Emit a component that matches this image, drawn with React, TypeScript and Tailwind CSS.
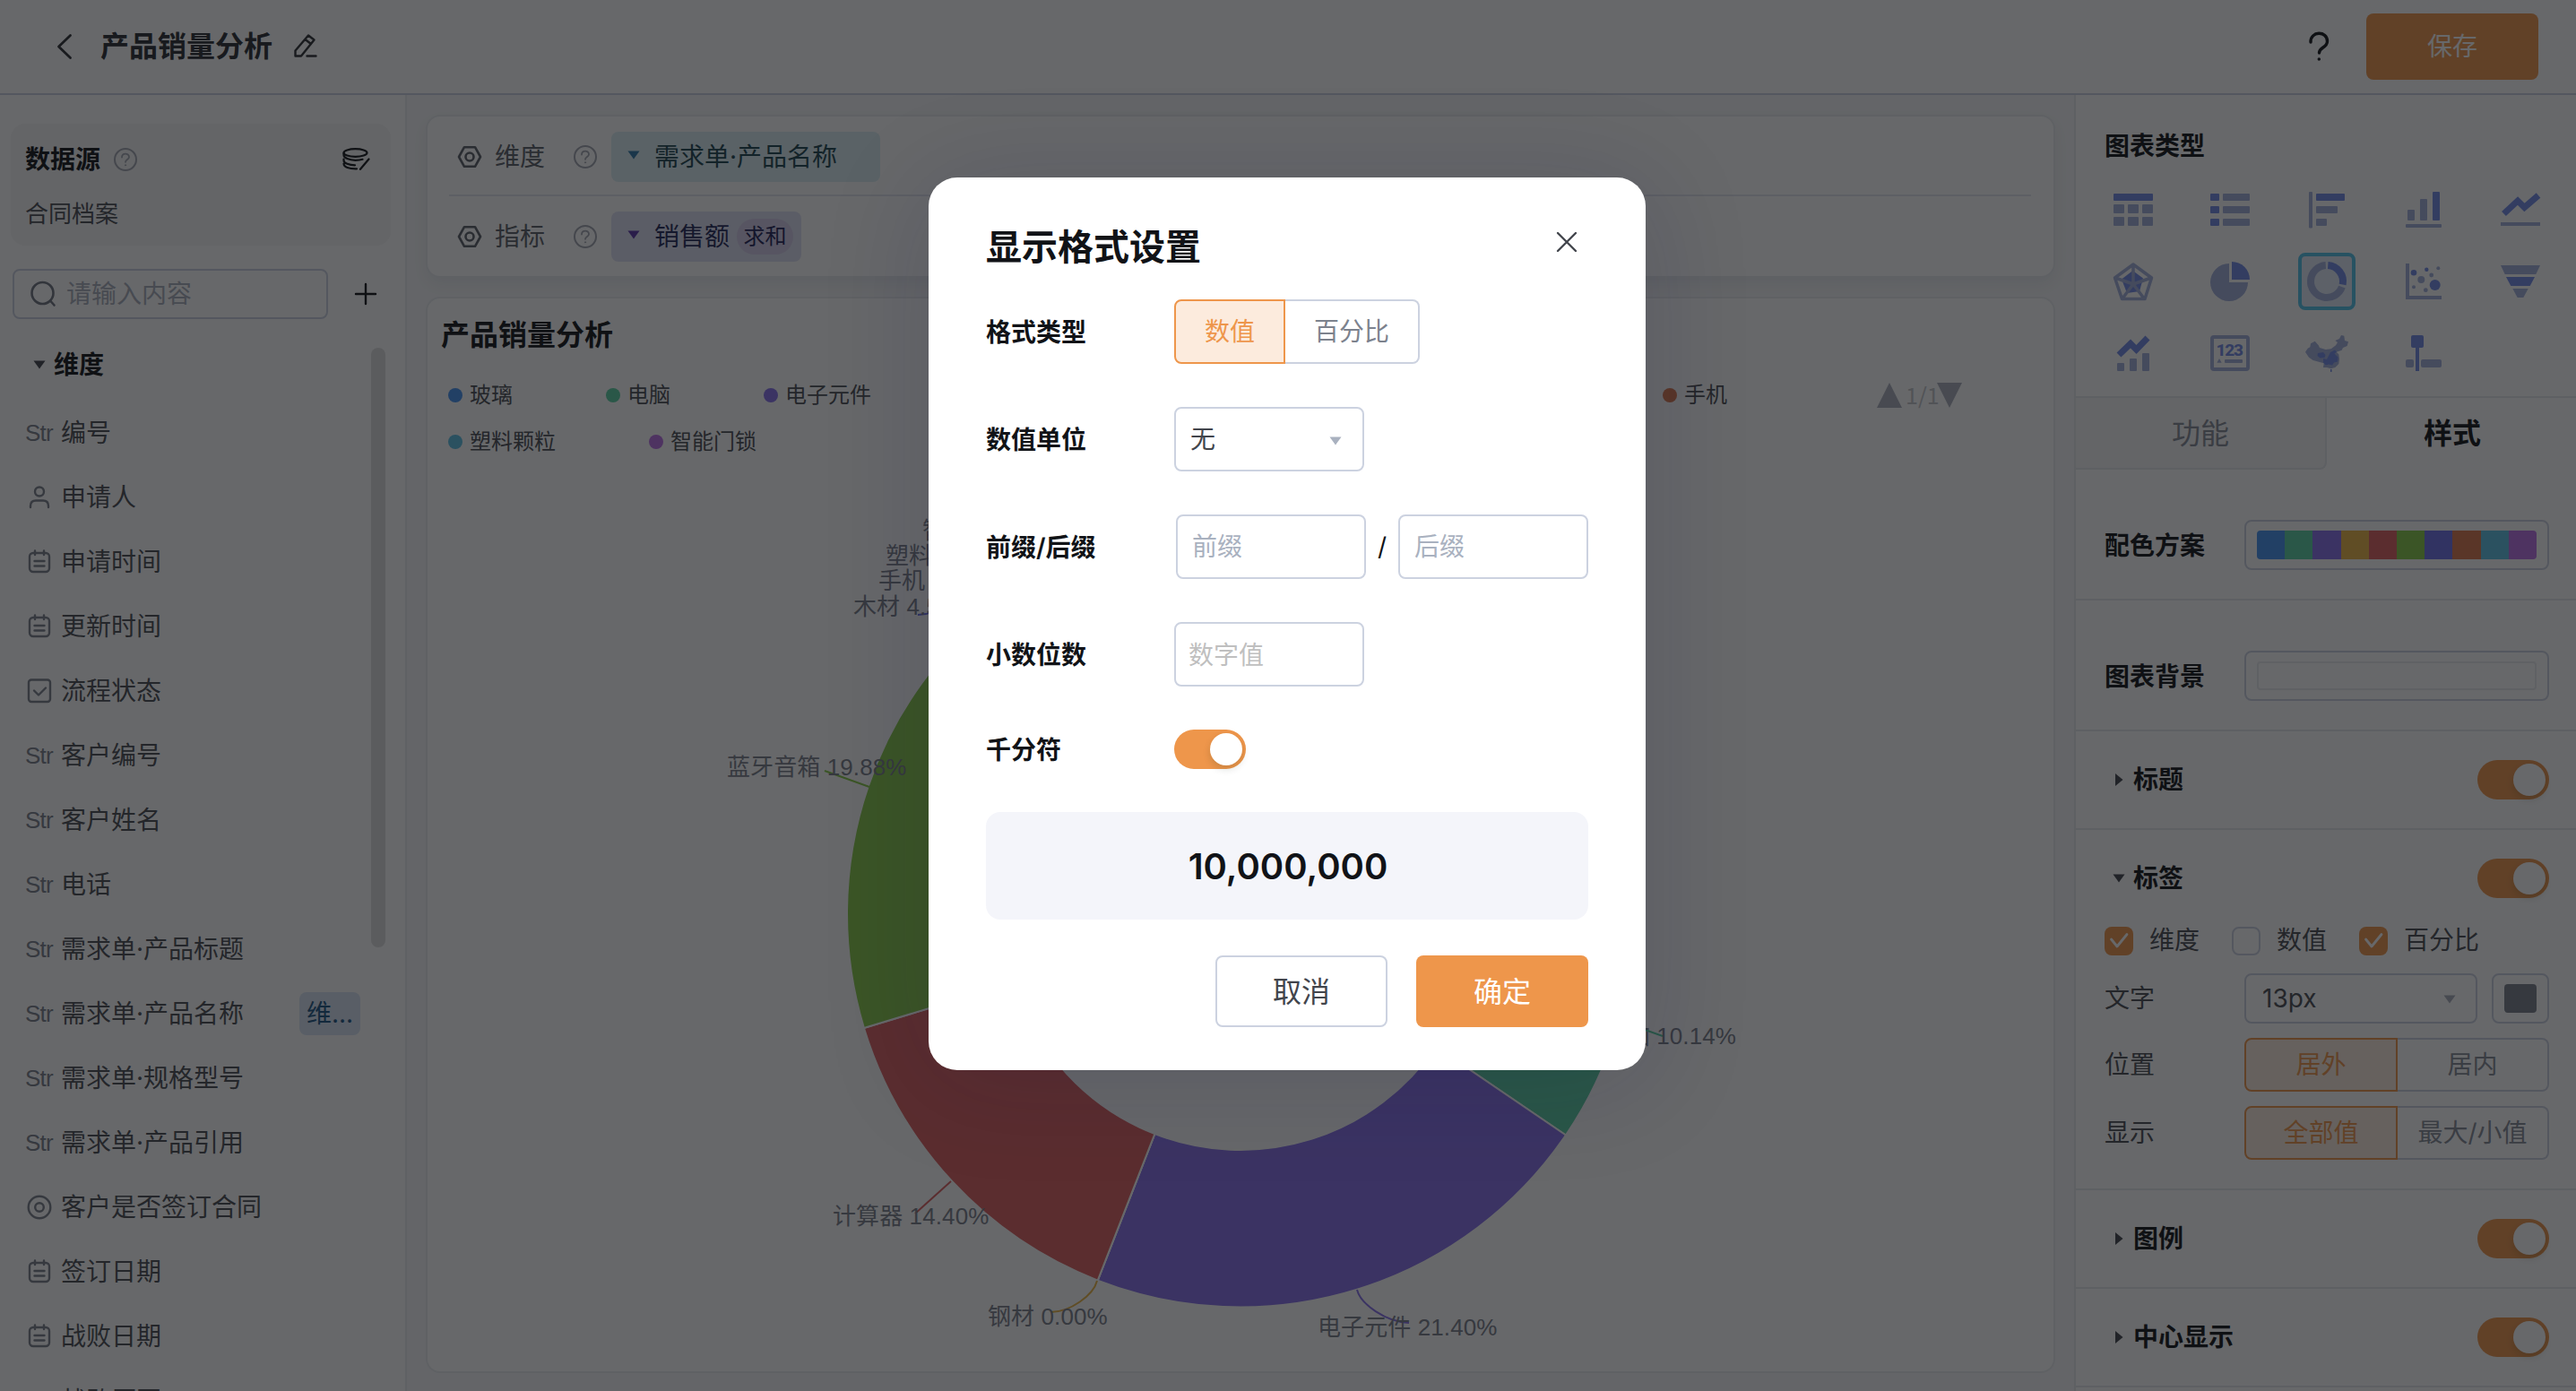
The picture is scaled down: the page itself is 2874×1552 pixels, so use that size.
import type { ReactNode } from 'react';
import { clsx } from 'clsx';

const PALETTE = [
  '#4692f0', '#5ad0a2', '#8771eb', '#ecb646', '#dd6161',
  '#88cc48', '#6c6fe8', '#dc784c', '#5cc0e4', '#bc6fe6',
];

type FieldKind = 'str' | 'user' | 'date' | 'check' | 'radio';

const FIELDS: { kind: FieldKind; label: string; tag?: string }[] = [
  { kind: 'str', label: '编号' },
  { kind: 'user', label: '申请人' },
  { kind: 'date', label: '申请时间' },
  { kind: 'date', label: '更新时间' },
  { kind: 'check', label: '流程状态' },
  { kind: 'str', label: '客户编号' },
  { kind: 'str', label: '客户姓名' },
  { kind: 'str', label: '电话' },
  { kind: 'str', label: '需求单·产品标题' },
  { kind: 'str', label: '需求单·产品名称', tag: '维...' },
  { kind: 'str', label: '需求单·规格型号' },
  { kind: 'str', label: '需求单·产品引用' },
  { kind: 'radio', label: '客户是否签订合同' },
  { kind: 'date', label: '签订日期' },
  { kind: 'date', label: '战败日期' },
  { kind: 'str', label: '战败原因' },
];

const LEGEND = [
  [
    { name: '玻璃', color: PALETTE[0], width: 'w-[176px]' },
    { name: '电脑', color: PALETTE[1], width: 'w-[176px]' },
    { name: '电子元件', color: PALETTE[2], width: 'w-[224px]' },
    { name: '钢材', color: PALETTE[3], width: 'w-[176px]' },
    { name: '计算器', color: PALETTE[4], width: 'w-[200px]' },
    { name: '蓝牙音箱', color: PALETTE[5], width: 'w-[224px]' },
    { name: '木材', color: PALETTE[6], width: 'w-[179px]' },
    { name: '手机', color: PALETTE[7], width: 'w-[239px]' },
  ],
  [
    { name: '塑料颗粒', color: PALETTE[8], width: 'w-[224px]' },
    { name: '智能门锁', color: PALETTE[9], width: 'w-[224px]' },
  ],
];

// share of the total, in percent, clockwise from twelve o'clock
const SLICES = [
  { value: 24.37, color: PALETTE[0] },
  { value: 10.14, color: PALETTE[1] },
  { value: 21.4, color: PALETTE[2] },
  { value: 0, color: PALETTE[3] },
  { value: 14.4, color: PALETTE[4] },
  { value: 19.88, color: PALETTE[5] },
  { value: 4.51, color: PALETTE[6] },
  { value: 2.6, color: PALETTE[7] },
  { value: 1.5, color: PALETTE[8] },
  { value: 1.2, color: PALETTE[9] },
];

const CX = 1384;
const CY = 1018.5;

function point(r: number, pct: number) {
  const a = (pct / 100) * Math.PI * 2;
  return `${(CX + r * Math.sin(a)).toFixed(2)} ${(CY - r * Math.cos(a)).toFixed(2)}`;
}

function slicePath(from: number, to: number) {
  const big = to - from > 50 ? 1 : 0;
  return `M${point(439, from)} A439 439 0 ${big} 1 ${point(439, to)} L${point(263.5, to)} A263.5 263.5 0 ${big} 0 ${point(263.5, from)} Z`;
}

function Help() {
  return (
    <svg width="26" height="26" viewBox="0 0 26 26" fill="none" stroke="#a2a6b0" strokeWidth="2" strokeLinecap="round">
      <circle cx="13" cy="13" r="12" />
      <path d="M9 10.500c0-5 8-5 8-.3 0 2.800-4 2.800-4 5.600" strokeWidth="1.800" />
      <circle cx="13" cy="19.300" r="0.600" fill="#a2a6b0" strokeWidth="1" />
    </svg>
  );
}

function Hexagon() {
  return (
    <svg width="28" height="28" viewBox="0 0 28 28" fill="none" stroke="#5b5f68" strokeWidth="2.600" strokeLinejoin="round">
      <path d="M8 3.200h12L26 14l-6 10.800H8L2 14Z" />
      <circle cx="14" cy="14" r="4.500" />
    </svg>
  );
}

function Caret({ className, right }: { className?: string; right?: boolean }) {
  return (
    <svg width="14" height="14" viewBox="0 0 14 14" className={clsx('shrink-0', className)} fill="currentColor">
      {right ? <path d="M3 0l8.500 7L3 14z" /> : <path d="M0.500 2.500h13L7 11.500z" />}
    </svg>
  );
}

function FieldIcon({ kind }: { kind: FieldKind }) {
  if (kind === 'str') {
    return <span className="mr-px font-['Liberation_Sans',sans-serif] text-[26px] tracking-[-0.8px]">Str</span>;
  }
  return (
    <svg width="32" height="32" viewBox="0 0 32 32" fill="none" stroke="currentColor" strokeWidth="2.400" strokeLinecap="round" strokeLinejoin="round">
      {kind === 'user' && (
        <>
          <circle cx="16" cy="9.500" r="5" />
          <path d="M6 27v-1.500c0-4 2.500-6 6-6h8c3.500 0 6 2 6 6V27" />
        </>
      )}
      {kind === 'date' && (
        <>
          <rect x="5" y="6" width="22" height="21" rx="4" />
          <path d="M11 3.500v4.500M21 3.500v4.500M10.500 15h11M10.500 20.500h11" />
        </>
      )}
      {kind === 'check' && (
        <>
          <rect x="4" y="3.500" width="24" height="24.500" rx="3" />
          <path d="M10 15.500l5 5 8-8" />
        </>
      )}
      {kind === 'radio' && (
        <>
          <circle cx="16" cy="16" r="12.300" />
          <circle cx="16" cy="16" r="4.800" />
        </>
      )}
    </svg>
  );
}

function Toggle() {
  return (
    <div className="flex h-11 w-20 shrink-0 justify-end rounded-full bg-[#ee964b] p-1">
      <div className="size-9 rounded-full bg-white shadow-[0_4px_8px_rgba(0,35,11,0.15)]" />
    </div>
  );
}

const D = '#728be6';
const L = '#a3b0dc';

const CHART_ICONS: ReactNode[] = [
  <g fill={L}>
    <rect x="2" y="6" width="44" height="8" rx="1" fill={D} />
    {[18, 32].map(y => [2, 18, 34].map(x => <rect key={`${x}-${y}`} x={x} y={y} width="12" height="10" rx="1" />))}
  </g>,
  <g>
    {[6, 20, 34].map(y => (
      <g key={y}>
        <rect x="2" y={y} width="10" height="8" rx="1" fill={D} />
        <rect x="16" y={y} width="30" height="8" rx="1" fill={L} />
      </g>
    ))}
  </g>,
  <g fill={L}>
    <rect x="4" y="4" width="4" height="40.500" rx="1" />
    <rect x="12" y="6" width="32" height="8" rx="1" fill={D} />
    <rect x="12" y="20" width="24" height="8" rx="1" />
    <rect x="12" y="34" width="12" height="8" rx="1" />
  </g>,
  <g fill={L}>
    <rect x="6" y="24" width="8" height="12" rx="1" />
    <rect x="20" y="12" width="8" height="24" rx="1" />
    <rect x="34" y="4" width="8" height="32" rx="1" fill={D} />
    <rect x="4" y="40" width="40" height="4" rx="1" />
  </g>,
  <g>
    <path d="M5.500 28.500L21 14l7.500 7.500L44 8" fill="none" stroke={D} strokeWidth="7" />
    <rect x="2" y="38" width="44" height="4" fill={L} />
  </g>,
  <g strokeLinejoin="round">
    <path d="M23.500 12L35 20.500 31 35l-14 2-6-15.500z" fill={D} />
    <path d="M24 5l20.500 15L37 43.500H11.500L3.500 20zM24 5v22M44 20L24 27l12 16M4 20l20 7-12 16" fill="none" stroke={L} strokeWidth="3.500" />
  </g>,
  <g>
    <path d="M23 4a21 21 0 1 0 21 21H23z" fill={L} />
    <path d="M26 2a20 20 0 0 1 20 20H26z" fill={D} />
  </g>,
  <g fill="none" strokeWidth="8">
    <path d="M25.260 6.040A18 18 0 0 1 41.670 27.430" stroke={D} />
    <path d="M40.910 30.160A18 18 0 1 1 22.740 6.040" stroke={L} />
  </g>,
  <g fill={L}>
    <path d="M4 4h4v36h36v4H4z" />
    <circle cx="13" cy="14.300" r="3.300" fill={D} />
    <circle cx="27.300" cy="10.700" r="2.200" fill={D} />
    <circle cx="40.300" cy="9.300" r="2" />
    <circle cx="32.700" cy="17" r="2.400" />
    <circle cx="21.300" cy="22" r="4" />
    <circle cx="13" cy="30.300" r="2" />
    <circle cx="26.300" cy="33.700" r="2.400" />
    <circle cx="36.700" cy="28" r="6" fill={D} />
  </g>,
  <g fill={L}>
    <path d="M2 6h44l-4.700 10H6.700z" />
    <path d="M8 19h32l-5.300 10H13.300z" fill={D} />
    <path d="M15.300 32h17.400l-5.400 10h-6.600z" />
  </g>,
  <g fill={L}>
    <path d="M8 26l13-12.500 6.500 6.500L40 7" fill="none" stroke={D} strokeWidth="7" />
    <rect x="6" y="35" width="8" height="9" rx="1" />
    <rect x="20" y="30" width="8" height="14" rx="1" />
    <rect x="34" y="24" width="8" height="20" rx="1" />
  </g>,
  <g fill={L}>
    <rect x="4" y="6" width="40" height="36" rx="2" fill="none" stroke={L} strokeWidth="4" />
    <text x="8.500" y="27.200" fontSize="19" fontWeight="800" textLength="30.500" fill={D} fontFamily="Roboto, sans-serif">123</text>
    <path d="M9.300 34.700h5.400L12 30z" />
    <rect x="18" y="31" width="20" height="4" rx="1" />
  </g>,
  <g fill={L}>
    <path d="M0 22.700l2.700-4 2.600-1.400.7-4 4.700-2.600 4 4.600L16 18l6.700 2 6-.700 5.300-4 2-3.300-2.700-2L38 8l2-4 3.300.7L44 10l4 1.300-1.300 4.700L42 18l-1.300 2.700-6 2 2.600 2.600.7 5.400-.7 5.300-4 4-4.600 1.300-4.700-1.300h-4l.7-4.700L16 34l-7.300-2L4 28.700z" />
    <path d="M14 24l6-1 2.500 3-1 3-5 .5-3-2.500zM20 30l4 1 2-4 2-4 5-2.500 2 2-2.500 2 4 4-.5 5-4 1-2 3-4-1-3 1-3-3zM28 42h1.500v3H28z" fill={D} />
  </g>,
  <g fill={L}>
    <rect x="4" y="31" width="9" height="9" rx="2" />
    <rect x="21" y="31" width="23" height="9" rx="2" />
    <rect x="10" y="4" width="14" height="14" rx="2" fill={D} />
    <rect x="15" y="17" width="4" height="27" fill={D} />
  </g>,
];

function Header() {
  return (
    <header className="flex h-[106px] shrink-0 items-center border-b-2 border-[#ccd2e1] bg-white pl-[60px] pr-[42px]">
      <svg width="24" height="30" viewBox="0 0 24 30" fill="none" stroke="#2c2e33" strokeWidth="2.800" strokeLinecap="round" strokeLinejoin="round">
        <path d="M18.500 2.500L5.500 15l13 12.500" />
      </svg>
      <h1 className="ml-7 text-[32px] font-semibold text-[#2a2c31]">产品销量分析</h1>
      <svg className="mb-0.5 ml-6" width="26" height="28" viewBox="0 0 26 28" fill="none" stroke="#2c2e33" strokeWidth="2.400" strokeLinecap="round" strokeLinejoin="round">
        <path d="M16 2.500l6.500 5L8 25.500H1.500v-6zM12.500 7l6.500 5M14.500 25.500h10" />
      </svg>
      <svg className="ml-auto" width="26" height="34" viewBox="0 0 26 34" fill="none" stroke="#111317" strokeWidth="3.400" strokeLinecap="round">
        <path d="M4 12C3.500-.5 22.500-1 22.500 11c0 7.500-9 6.500-9 13" />
        <circle cx="13.300" cy="31" r="1" fill="#111317" strokeWidth="1.500" />
      </svg>
      <button className="ml-10 h-[74px] w-[192px] rounded-lg bg-[#ee964b] text-[28px] text-white">保存</button>
    </header>
  );
}

function Sidebar() {
  return (
    <aside className="flex w-[454px] shrink-0 flex-col border-r-2 border-[#eaebee] bg-white pt-8">
      <div className="ml-3 flex h-[136px] w-[424px] flex-col rounded-2xl bg-[#f6f6f6] px-4 pt-[19px]">
        <div className="flex h-[42px] items-center">
          <span className="text-[28px] font-semibold text-[#111317]">数据源</span>
          <span className="ml-[15px]"><Help /></span>
          <svg className="ml-auto mr-[7px]" width="32" height="28" viewBox="0 0 32 28" fill="none" stroke="#111317" strokeWidth="2.200" strokeLinecap="round" strokeLinejoin="round">
            <ellipse cx="15.500" cy="6.500" rx="13" ry="4.300" />
            <path d="M2.500 7v2.500c0 2.800 5.500 7.500 19 6.500M4.500 12.500c-5.500 5.500 2 9.500 17 8M3 18.500c0 4 6 6 14.500 5.700M30.500 13L21 24.500" stroke="none" />
            <path d="M2.500 7v2c0 3.200 6 5.800 13 5.800 3 0 5.800-.3 8-1M2.500 13.500v1.500c0 3.200 6 5.300 12.500 5.300M2.500 18.500c0 3.800 6 6 14.500 5.800M30.500 13.500L21 24.800" />
          </svg>
        </div>
        <span className="mt-[21px] text-[26px] leading-[38px] text-[#494c53]">合同档案</span>
      </div>

      <div className="mt-[26px] flex items-center pl-[14px]">
        <div className="flex h-14 w-[352px] items-center rounded-lg border-2 border-[#ccd2e1] pl-[17px]">
          <svg width="30" height="30" viewBox="0 0 30 30" fill="none" stroke="#6f7480" strokeWidth="2.600" strokeLinecap="round">
            <circle cx="14.500" cy="14" r="12" />
            <path d="M23.500 23l4 4.500" />
          </svg>
          <span className="ml-[11px] text-[28px] text-[#a9aeba]">请输入内容</span>
        </div>
        <svg className="ml-[29px]" width="26" height="26" viewBox="0 0 26 26" stroke="#111317" strokeWidth="2.400" strokeLinecap="round">
          <path d="M13 2v22M2 13h22" />
        </svg>
      </div>

      <div className="mt-8 flex min-h-0 flex-1">
        <div className="w-[414px] overflow-hidden">
          <div className="flex h-[38px] items-center pl-[37px]">
            <Caret className="text-[#42454c]" />
            <span className="ml-[9px] text-[28px] font-semibold text-[#111317]">维度</span>
          </div>
          <div className="mt-[21px]">
            {FIELDS.map(f => (
              <div key={f.label} className="flex h-[72px] items-center">
                <span className="flex w-[68px] items-center justify-center pl-5 text-[#7b808c]">
                  <FieldIcon kind={f.kind} />
                </span>
                <span className="whitespace-nowrap text-[28px] text-[#494c53]">{f.label}</span>
                {f.tag && (
                  <span className="ml-auto mr-3 flex h-12 w-[68px] items-center justify-center rounded-lg bg-[#d8e4f4] text-[28px] text-[#1d5583]">
                    {f.tag}
                  </span>
                )}
              </div>
            ))}
          </div>
        </div>
        <div className="h-[669px] w-4 rounded-full bg-[#dedede]" />
      </div>
    </aside>
  );
}

function Conditions() {
  return (
    <section className="flex h-[182px] shrink-0 flex-col rounded-2xl border-2 border-[#e9ebef] bg-white pl-6 pr-[25px] shadow-[0_8px_16px_rgba(20,30,60,0.06)]">
      <div className="flex h-[90px] items-center border-b-2 border-[#e3e6ee] pl-[9px] pt-0.5">
        <Hexagon />
        <span className="ml-[14px] text-[28px] text-[#5b5f68]">维度</span>
        <span className="ml-8"><Help /></span>
        <div className="ml-4 flex h-14 w-[300px] items-center rounded-lg bg-[#dbeff3] pl-[18px]">
          <Caret className="mb-1 text-[#2f78a8]" />
          <span className="ml-4 text-[28px] text-[#1b4550]">需求单·产品名称</span>
        </div>
      </div>
      <div className="flex h-[90px] items-center pl-[9px]">
        <Hexagon />
        <span className="ml-[14px] text-[28px] text-[#5b5f68]">指标</span>
        <span className="ml-8"><Help /></span>
        <div className="ml-4 flex h-14 w-[212px] items-center rounded-lg bg-[#dfe1f3] pl-[18px]">
          <Caret className="mb-1 text-[#5a34a8]" />
          <span className="ml-4 text-[28px] text-[#1f2757]">销售额</span>
          <span className="ml-2 flex h-10 w-[63px] items-center justify-center rounded-[20px] bg-[#d3cbea] text-2xl text-[#1f1f57]">求和</span>
        </div>
      </div>
    </section>
  );
}

function DonutChart() {
  let acc = 0;
  const arcs = SLICES.map(s => {
    const from = acc;
    acc += s.value;
    return { d: slicePath(from, acc), color: s.color };
  });
  return (
    <svg width="1814" height="1009" viewBox="477 520 1814 1009" className="block font-['Liberation_Sans','Noto_Sans_CJK_SC',sans-serif]">
      {arcs.map(a => (
        <path key={a.color} d={a.d} fill={a.color} stroke="#fff" strokeWidth="2" />
      ))}
      <g fill="none" strokeWidth="2">
        <path d="M920 859l50 18" stroke={PALETTE[5]} />
        <path d="M1021 1353l40-36" stroke={PALETTE[4]} />
        <path d="M1224 1428c-4 16-30 35-52 35" stroke={PALETTE[3]} />
        <path d="M1514 1438c4 16 32 36 58 37" stroke={PALETTE[2]} />
        <path d="M1810 1139l45 16" stroke={PALETTE[1]} />
        <path d="M1024 685c14 0 22-5 50-20" stroke={PALETTE[6]} />
      </g>
      <g fontSize="26" fill="#7b808c" letterSpacing="0.1">
        <text x="1029" y="600">智能门锁 1.20%</text>
        <text x="988" y="628">塑料颗粒 1.50%</text>
        <text x="980" y="656">手机 2.60%</text>
        <text x="952" y="685">木材 4.51%</text>
        <text x="811" y="864">蓝牙音箱 19.88%</text>
        <text x="929" y="1365">计算器 14.40%</text>
        <text x="1102" y="1477">钢材 0.00%</text>
        <text x="1470" y="1489">电子元件 21.40%</text>
        <text x="1937" y="1164" textAnchor="end">电脑 10.14%</text>
      </g>
    </svg>
  );
}

function ChartPanel() {
  return (
    <section className="mt-[21px] flex h-[1201px] shrink-0 flex-col rounded-2xl border-2 border-[#e9ebef] bg-white">
      <h2 className="pl-[15px] pt-[17px] text-[32px] font-semibold leading-[48px] text-[#111317]">产品销量分析</h2>
      <div className="mb-0.5 mt-[17px] pl-[23px]">
        {LEGEND.map((row, i) => (
          <div key={i} className="flex h-[52px] items-center">
            {row.map(item => (
              <div key={item.name} className={clsx('flex shrink-0 items-center gap-2', item.width)}>
                <span className="size-4 rounded-full" style={{ background: item.color }} />
                <span className="text-2xl text-[#494c53]">{item.name}</span>
              </div>
            ))}
            {i === 0 && (
              <div className="flex items-center gap-1 text-[#c3c5c9]">
                <svg width="28" height="28" viewBox="0 0 28 28" fill="#aaafbb"><path d="M0 28L14 0l14 28z" /></svg>
                <span className="w-[31px] text-center font-['Noto_Sans_CJK_SC',sans-serif] text-[25px]">1/1</span>
                <svg width="28" height="28" viewBox="0 0 28 28" fill="#aaafbb"><path d="M0 0h28L14 28z" /></svg>
              </div>
            )}
          </div>
        ))}
      </div>
      <DonutChart />
    </section>
  );
}

function Segmented({ items }: { items: [string, string] }) {
  return (
    <div className="flex h-[60px] w-[340px] text-[28px]">
      <div className="flex w-[171px] items-center justify-center rounded-l-lg border-2 border-[#ee964b] bg-[#fcebdd] text-[#ee964b]">{items[0]}</div>
      <div className="flex flex-1 items-center justify-center rounded-r-lg border-2 border-l-0 border-[#ccd2e1] text-[#868b96]">{items[1]}</div>
    </div>
  );
}

function Checkbox({ label, checked }: { label: string; checked?: boolean }) {
  return (
    <div className="flex items-center">
      <div className={clsx('flex size-8 items-center justify-center rounded-lg', checked ? 'bg-[#ee964b]' : 'border-2 border-[#ccd2e1]')}>
        {checked && (
          <svg width="22" height="22" viewBox="0 0 22 22" fill="none" stroke="#fff" strokeWidth="2.800" strokeLinecap="round" strokeLinejoin="round">
            <path d="M2.500 9l6.500 8L20 3.500" />
          </svg>
        )}
      </div>
      <span className="mb-0.5 ml-[18px] text-[28px] text-[#494c53]">{label}</span>
    </div>
  );
}

function SwitchRow({ label, open }: { label: string; open?: boolean }) {
  return (
    <div className="flex h-[108px] items-center pl-[41px] pr-[30px]">
      <Caret right={!open} className="text-[#42454c]" />
      <span className="ml-[9px] text-[28px] font-semibold text-[#111317]">{label}</span>
      <div className="ml-auto"><Toggle /></div>
    </div>
  );
}

function SettingRow({ label, children, className }: { label: string; children: ReactNode; className?: string }) {
  return (
    <div className={clsx('flex items-center justify-between', className)}>
      <span className="text-[28px] text-[#494c53]">{label}</span>
      {children}
    </div>
  );
}

function StylePanel() {
  return (
    <aside className="flex w-[560px] shrink-0 flex-col overflow-hidden border-l-2 border-[#e6e8eb] bg-white">
      <div className="h-[336px] shrink-0 pt-[37px]">
        <h3 className="pl-8 text-[28px] font-semibold leading-[40px] text-[#111317]">图表类型</h3>
        <div className="mt-[11px] grid w-[550px] grid-cols-5 pl-[10px]">
          {CHART_ICONS.map((icon, i) => (
            <div key={i} className="flex h-20 items-center justify-center">
              <div className={clsx('flex size-16 items-center justify-center rounded-lg', i === 7 && 'border-4 border-[#52c3ea] bg-[#e3ebf8]')}>
                <svg width="48" height="48" viewBox="0 0 48 48" className="shrink-0">{icon}</svg>
              </div>
            </div>
          ))}
        </div>
      </div>

      <div className="flex h-[82px] shrink-0 border-t-2 border-[#e6e8eb] text-[32px]">
        <div className="flex w-[280px] items-center justify-center rounded-br-lg border-b-2 border-r-2 border-[#e6e8eb] bg-[#f6f6f6] pt-0.5 text-[#868b96]">功能</div>
        <div className="flex flex-1 items-center justify-center pl-0.5 font-semibold text-[#111317]">样式</div>
      </div>

      <div className="flex h-[146px] shrink-0 items-center justify-between border-b-2 border-[#e6e8eb] pb-3 pl-8 pr-[30px] pt-9">
        <span className="pt-px text-[28px] font-semibold text-[#111317]">配色方案</span>
        <div className="h-14 w-[340px] rounded-lg border-2 border-[#ccd2e1] px-3 py-[10px]">
          <div className="flex h-8 overflow-hidden rounded">
            {PALETTE.map(c => <span key={c} className="flex-1" style={{ background: c }} />)}
          </div>
        </div>
      </div>

      <div className="flex h-[146px] shrink-0 items-center justify-between border-b-2 border-[#e6e8eb] pl-8 pr-[30px] pt-6">
        <span className="pt-px text-[28px] font-semibold text-[#111317]">图表背景</span>
        <div className="h-14 w-[340px] rounded-lg border-2 border-[#ccd2e1] px-3 py-[10px]">
          <div className="h-8 rounded border-2 border-[#e9ebee]" />
        </div>
      </div>

      <div className="shrink-0 border-b-2 border-[#e6e8eb]">
        <SwitchRow label="标题" />
      </div>

      <div className="h-[402px] shrink-0 border-b-2 border-[#e6e8eb]">
        <SwitchRow label="标签" open />
        <div className="pl-8 pr-[30px]">
          <div className="flex h-8 items-center gap-9">
            <Checkbox label="维度" checked />
            <Checkbox label="数值" />
            <Checkbox label="百分比" checked />
          </div>
          <SettingRow label="文字" className="mt-5">
            <div className="flex w-[340px] gap-4">
              <div className="flex h-14 flex-1 items-center justify-between rounded-lg border-2 border-[#ccd2e1] pl-[18px] pr-[22px]">
                <span className="text-[28px] text-[#494c53]">13px</span>
                <Caret className="mt-0.5 text-[#a9aeba]" />
              </div>
              <div className="flex h-14 w-16 items-center justify-center rounded-lg border-2 border-[#ccd2e1]">
                <div className="h-8 w-9 rounded bg-[#7b808c]" />
              </div>
            </div>
          </SettingRow>
          <SettingRow label="位置" className="mt-4"><Segmented items={['居外', '居内']} /></SettingRow>
          <SettingRow label="显示" className="mt-4"><Segmented items={['全部值', '最大/小值']} /></SettingRow>
        </div>
      </div>

      <div className="shrink-0 border-b-2 border-[#e6e8eb]">
        <SwitchRow label="图例" />
      </div>
      <div className="shrink-0 border-b-2 border-[#e6e8eb]">
        <SwitchRow label="中心显示" />
      </div>
    </aside>
  );
}

function FormRow({ label, children, className }: { label: string; children: ReactNode; className?: string }) {
  return (
    <div className={clsx('flex items-center', className)}>
      <span className="w-[210px] pt-0.5 text-[28px] font-semibold text-[#111317]">{label}</span>
      {children}
    </div>
  );
}

function FormatDialog() {
  return (
    <div className="absolute inset-0 flex items-start justify-center bg-[rgba(14,16,19,0.63)] pr-0.5 pt-[198px]">
      <div className="h-[996px] w-[800px] rounded-[32px] bg-white px-16 shadow-[0_12px_120px_rgba(20,20,60,0.16)]">
        <div className="flex h-[136px] items-center justify-between pt-4">
          <h2 className="pt-1 text-[40px] font-semibold text-[#111317]">显示格式设置</h2>
          <svg className="mb-2 mr-3" width="24" height="24" viewBox="0 0 24 24" stroke="#42454c" strokeWidth="2.400" strokeLinecap="round">
            <path d="M2 2l20 20M22 2L2 22" />
          </svg>
        </div>

        <FormRow label="格式类型" className="h-[72px]">
          <div className="flex h-[72px] text-[28px]">
            <div className="flex w-[124px] items-center justify-center rounded-l-lg border-2 border-[#ee964b] bg-[#fcebdd] text-[#ee964b]">数值</div>
            <div className="flex w-[150px] items-center justify-center rounded-r-lg border-2 border-l-0 border-[#ccd2e0] text-[#7c828d]">百分比</div>
          </div>
        </FormRow>

        <FormRow label="数值单位" className="mt-12">
          <div className="flex h-[72px] w-[212px] items-center justify-between rounded-lg border-2 border-[#ccd2e0] pl-4 pr-[23px] text-[28px] text-[#42454c]">
            无
            <Caret className="mt-1 text-[#a9b1bf]" />
          </div>
        </FormRow>

        <FormRow label="前缀/后缀" className="mt-12">
          <div className="ml-0.5 flex h-[72px] w-[212px] items-center rounded-lg border-2 border-[#ccd2e0] pl-4 text-[28px] text-[#a9b1bf]">前缀</div>
          <span className="w-9 text-center text-[28px] text-[#111317]">/</span>
          <div className="flex h-[72px] w-[212px] items-center rounded-lg border-2 border-[#ccd2e0] pl-4 text-[28px] text-[#a9b1bf]">后缀</div>
        </FormRow>

        <FormRow label="小数位数" className="mt-12">
          <div className="flex h-[72px] w-[212px] items-center rounded-lg border-2 border-[#ccd2e0] pl-[14px] pt-0.5 text-[28px] text-[#bfbfbf]">数字值</div>
        </FormRow>

        <FormRow label="千分符" className="mt-12 h-11">
          <Toggle />
        </FormRow>

        <div className="mt-12 flex h-[120px] items-center justify-center rounded-2xl bg-[#f4f5fa] pl-0.5 pt-0.5 text-[40px] font-semibold text-[#111317]">
          10,000,000
        </div>

        <div className="mt-10 flex justify-end gap-8 text-[32px]">
          <button className="h-20 w-48 rounded-lg border-2 border-[#ccd2e0] pt-0.5 text-[#42454c]">取消</button>
          <button className="h-20 w-48 rounded-lg bg-[#ee964b] pt-0.5 text-white">确定</button>
        </div>
      </div>
    </div>
  );
}

export default function App() {
  return (
    <div className="relative flex h-[1552px] w-[2874px] flex-col overflow-hidden bg-[#f6f7f8] font-['Inter','Noto_Sans_CJK_SC',sans-serif] leading-normal">
      <Header />
      <div className="flex min-h-0 flex-1">
        <Sidebar />
        <main className="flex min-w-0 flex-1 flex-col overflow-hidden pl-[21px] pr-[21px] pt-[22px]">
          <Conditions />
          <ChartPanel />
        </main>
        <StylePanel />
      </div>
      <FormatDialog />
    </div>
  );
}
